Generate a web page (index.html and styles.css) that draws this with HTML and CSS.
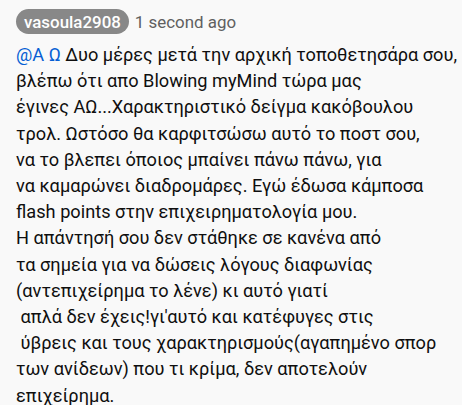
FILE: index.html
```html
<!DOCTYPE html>
<html lang="el">
<head>
<meta charset="utf-8">
<link rel="stylesheet" href="styles.css">
</head>
<body>
<div class="comment">
  <div class="header">
    <span class="author">vasoula2908</span>
    <span class="time">1 second ago</span>
  </div>
  <p class="text"><a class="mention">@Α Ω</a> Δυο μέρες μετά την αρχική τοποθετησάρα σου,<br>βλέπω ότι απο Blowing myMind τώρα μας<br>έγινες ΑΩ...Χαρακτηριστικό δείγμα κακόβουλου<br>τρολ. Ωστόσο θα καρφιτσώσω αυτό το ποστ σου,<br>να το βλεπει όποιος μπαίνει πάνω πάνω, για<br>να καμαρώνει διαδρομάρες. Εγώ έδωσα κάμποσα<br>flash points στην επιχειρηματολογία μου.<br>Η απάντησή σου δεν στάθηκε σε κανένα από<br>τα σημεία για να δώσεις λόγους διαφωνίας<br>(αντεπιχείρημα το λένε) κι αυτό γιατί<br>&nbsp;απλά δεν έχεις!γι'αυτό και κατέφυγες στις<br>&nbsp;ύβρεις και τους χαρακτηρισμούς(αγαπημένο σπορ<br>των ανίδεων) που τι κρίμα, δεν αποτελούν<br>επιχείρημα.</p>
</div>
</body>
</html>
```

FILE: styles.css
```css
html, body {
  margin: 0;
  padding: 0;
  background: #f9f9f9;
}
body {
  font-family: Roboto, "Noto Sans", Arial, sans-serif;
  color: #0f0f0f;
}
.comment {
  padding: 9px 0 0 16px;
}
.header {
  display: flex;
  align-items: center;
  gap: 6px;
  height: 25px;
}
.author {
  display: inline-flex;
  align-items: center;
  height: 25px;
  padding: 0 8px;
  border-radius: 13px;
  background: #888888;
  color: #ffffff;
  font-size: 16.9px;
  font-weight: 500;
}
.time {
  color: #606060;
  font-size: 16.9px;
}
.text {
  margin: 8px 0 0 0;
  font-size: 18.2px;
  line-height: 26.2px;
  white-space: nowrap;
}
.mention {
  color: #065fd4;
  text-decoration: none;
}
```
